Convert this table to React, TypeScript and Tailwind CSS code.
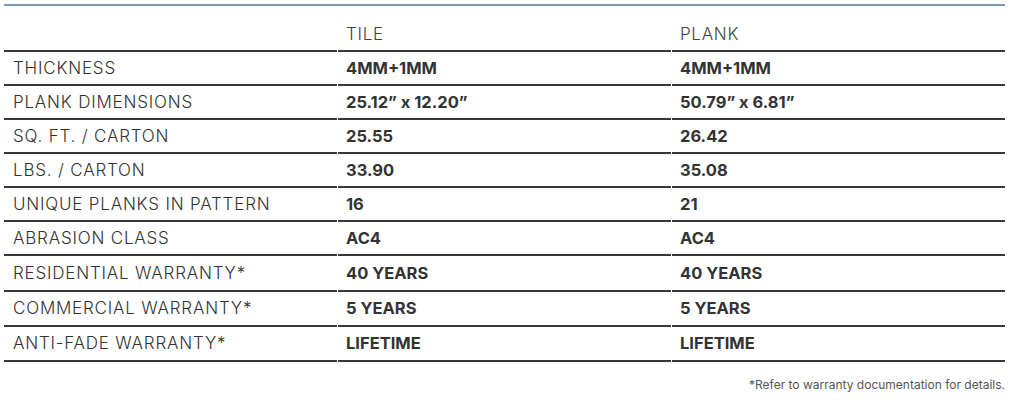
const rows: { label: string; tile: string; plank: string; h: string }[] = [
  { label: 'THICKNESS', tile: '4MM+1MM', plank: '4MM+1MM', h: 'h-[32px]' },
  { label: 'PLANK DIMENSIONS', tile: '25.12” x 12.20”', plank: '50.79” x 6.81”', h: 'h-[32px]' },
  { label: 'SQ. FT. / CARTON', tile: '25.55', plank: '26.42', h: 'h-[32px]' },
  { label: 'LBS. / CARTON', tile: '33.90', plank: '35.08', h: 'h-[32px]' },
  { label: 'UNIQUE PLANKS IN PATTERN', tile: '16', plank: '21', h: 'h-[32px]' },
  { label: 'ABRASION CLASS', tile: 'AC4', plank: 'AC4', h: 'h-[32px]' },
  { label: 'RESIDENTIAL WARRANTY*', tile: '40 YEARS', plank: '40 YEARS', h: 'h-[34px]' },
  { label: 'COMMERCIAL WARRANTY*', tile: '5 YEARS', plank: '5 YEARS', h: 'h-[33px]' },
  { label: 'ANTI-FADE WARRANTY*', tile: 'LIFETIME', plank: 'LIFETIME', h: 'h-[33px]' },
]

function Rule() {
  return (
    <div className="grid grid-cols-[333px_334px_334px]">
      <div className="h-[2px] bg-[#383838]" />
      <div className="h-[2px] bg-[#383838] ml-px" />
      <div className="h-[2px] bg-[#383838] ml-px" />
    </div>
  )
}

export default function App() {
  return (
    <div className="w-[1010px] h-[400px] bg-white px-[4px] pt-[4px] text-[#333] font-['Inter','Liberation_Sans',sans-serif]">
      <div className="w-[1001px]">
        <div className="h-[2px] bg-[#7f98ae]" />

        {/* Header */}
        <div className="grid grid-cols-[333px_334px_334px] h-[44px]">
          <div />
          <div className="flex items-end pb-[3px] pl-[9px] text-[17px] font-light tracking-[0.7px] text-[#444]">TILE</div>
          <div className="flex items-end pb-[3px] pl-[9px] text-[17px] font-light tracking-[0.7px] text-[#444]">PLANK</div>
        </div>
        <Rule />

        {/* Rows */}
        {rows.map((row) => (
          <div key={row.label}>
            <div className={`grid grid-cols-[333px_334px_334px] ${row.h}`}>
              <div className="flex items-center pt-px pl-[9px] text-[17px] font-light tracking-[0.8px]">{row.label}</div>
              <div className="flex items-center pl-[9px] text-[16.5px] font-bold">{row.tile}</div>
              <div className="flex items-center pl-[9px] text-[16.5px] font-bold">{row.plank}</div>
            </div>
            <Rule />
          </div>
        ))}

        {/* Footnote */}
        <div className="flex justify-end pt-[14px] text-[12px] text-[#555]">
          *Refer to warranty documentation for details.
        </div>
      </div>
    </div>
  )
}
